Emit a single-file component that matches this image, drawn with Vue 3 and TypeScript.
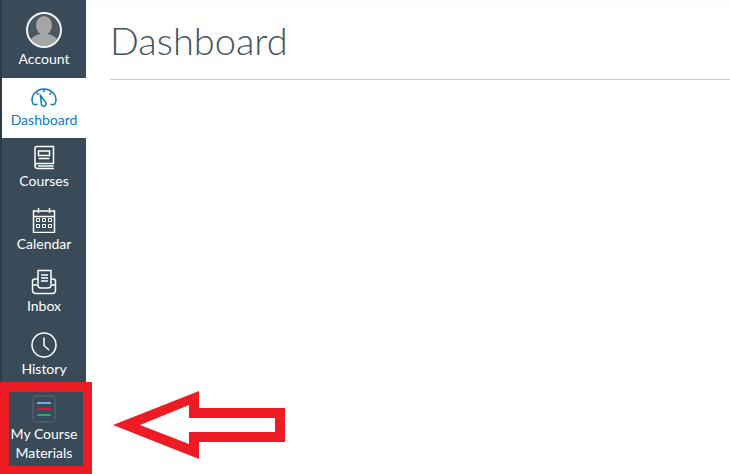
<template>
  <div class="page">
    <nav class="nav">
      <a class="item account">
        <span class="avatar">
          <svg width="36" height="36" viewBox="0 0 36 36">
            <defs>
              <clipPath id="round"><circle cx="18" cy="18" r="16" /></clipPath>
            </defs>
            <circle cx="18" cy="18" r="16" fill="#4a5660" />
            <g clip-path="url(#round)" fill="#a5a5a5">
              <ellipse cx="18" cy="13.500" rx="8" ry="9.500" />
              <path d="M2 36c0-9 5-12 12-14h8c7 2 12 5 12 14z" />
            </g>
            <circle cx="18" cy="18" r="17" fill="none" stroke="#f4f4f4" stroke-width="2" />
          </svg>
        </span>
        <span>Account</span>
      </a>
      <a class="item active">
        <svg class="icon" width="28" height="20" viewBox="0 0 28 20" fill="none" stroke="#0c7bbf" stroke-width="1.500">
          <path d="M7.500 17.500H3.500C2.500 16 2 14.500 2 13 2 7 7.500 2 14 2s12 5 12 11c0 1.500-.5 3-1.500 4.500H20.500" />
          <path d="M10.500 8.500l5.500 7.300c.6 1.800-.6 3.400-2.200 3.400-1.500 0-2.600-1.200-2.500-2.800z" />
          <path d="M14 2v3M6.500 5.500l2 2M21.500 5.500l-2 2" />
        </svg>
        <span>Dashboard</span>
      </a>
      <a v-for="link in links" :key="link.label" class="item">
        <svg class="icon" width="26" height="26" viewBox="0 0 26 26" fill="none" stroke="#fff" stroke-width="1.500">
          <path v-for="d in link.paths" :key="d" :d="d" />
          <path v-if="link.thin" :d="link.thin" stroke-width="1" />
        </svg>
        <span>{{ link.label }}</span>
      </a>
      <a class="item materials">
        <span class="stack">
          <i class="line blue"></i>
          <i class="line red"></i>
          <i class="line green"></i>
        </span>
        <span>My Course<br>Materials</span>
      </a>
    </nav>
    <main class="main">
      <h1 class="title">Dashboard</h1>
    </main>
    <div class="highlight"></div>
    <svg class="arrow" width="180" height="74" viewBox="0 0 180 74">
      <path fill="#ed1c24" fill-rule="evenodd" d="M1 34 87 0V17H173V51H87V68ZM28 34 77 53V41H163V27H77V14Z" />
    </svg>
  </div>
</template>

<script setup lang="ts">
interface NavLink {
  label: string;
  paths: string[];
  thin?: string;
}

const links: NavLink[] = [
  {
    label: 'Courses',
    paths: [
      'M4 21V4C4 3 5 2.500 6 2.500H22.500V19.500H6.500C5 19.500 4 20.500 4 22S5 24.500 6.500 24.500H23',
      'M7.500 7H18.500V11.500H7.500Z',
      'M7.500 14.500H18.500M7 22H22.500',
    ],
  },
  {
    label: 'Calendar',
    paths: [
      'M2.500 4H23.500V25.500H2.500Z',
      'M2.500 9.500H23.500M7.500 1V6M18.500 1V6',
    ],
    thin: 'M5.500 11.500H8.500V14.500H5.500ZM11.500 11.500H14.500V14.500H11.500ZM17.500 11.500H20.500V14.500H17.500ZM5.500 17.500H8.500V20.500H5.500ZM11.500 17.500H14.500V20.500H11.500ZM17.500 17.500H20.500V20.500H17.500Z',
  },
  {
    label: 'Inbox',
    paths: [
      'M7 15V1.500H20V15',
      'M10 6H17M10 9H17M10 12H17',
      'M7 10H4C2.500 10 1.500 11 1.500 12.500V21C1.500 23 3 24.500 5 24.500H21C23 24.500 24.500 23 24.500 21V12.500C24.500 11 23.500 10 22 10H20',
      'M2 16H7C7 18 8 19 10 19H17C19 19 20 18 20 16H24',
    ],
  },
  {
    label: 'History',
    paths: [
      'M13 1C19.600 1 25 6.400 25 13S19.600 25 13 25 1 19.600 1 13 6.400 1 13 1Z',
      'M13 5.500V13.500L18 18',
    ],
  },
];
</script>

<style scoped>
.page {
  position: relative;
  display: flex;
  height: 474px;
  overflow: hidden;
  background: #fff;
  font-family: Lato, "Open Sans", sans-serif;
}

.nav {
  flex: none;
  box-sizing: border-box;
  width: 86px;
  border-left: 2px solid #2d3b45;
  background: #394b58;
  color: #fff;
  font-size: 14px;
  line-height: 19px;
}

.item {
  display: flex;
  flex-direction: column;
  align-items: center;
  box-sizing: border-box;
  height: 62.500px;
  padding-top: 6px;
  text-align: center;
}

.icon {
  display: block;
  margin-bottom: 1px;
}

.account {
  height: 78px;
  padding-top: 12px;
}

.avatar {
  display: block;
  height: 38px;
  margin-bottom: -1px;
}

.active {
  height: 60px;
  padding-top: 9px;
  background: #fff;
  color: #0c7bbf;
}

.active .icon {
  margin-bottom: 3px;
}

.materials {
  height: 92px;
  padding-top: 7px;
}

.stack {
  display: flex;
  flex-direction: column;
  justify-content: center;
  gap: 4px;
  box-sizing: border-box;
  width: 24px;
  height: 28px;
  margin-bottom: 1px;
  border: 2px solid #4a5a66;
  border-radius: 5px;
  padding: 0 3px;
}

.line {
  display: block;
  height: 2px;
}

.blue {
  background: #7ba7dc;
}

.red {
  background: #e3122c;
}

.green {
  background: #2fa36b;
}

.main {
  flex: 1;
  box-sizing: border-box;
  padding: 0 0 0 24px;
  border-top: 1px solid #fafafa;
}

.title {
  height: 78px;
  margin: 0;
  border-bottom: 1px solid #c7cdd1;
  font-size: 38px;
  font-weight: 300;
  line-height: 78px;
  color: #45555f;
}

.highlight {
  position: absolute;
  left: 0;
  top: 382px;
  box-sizing: border-box;
  width: 92px;
  height: 92px;
  border: 9px solid #ed1c24;
  border-bottom-width: 8px;
  border-top-width: 10px;
}

.arrow {
  position: absolute;
  left: 112px;
  top: 391px;
}
</style>

<style>
body {
  margin: 0;
}
</style>
